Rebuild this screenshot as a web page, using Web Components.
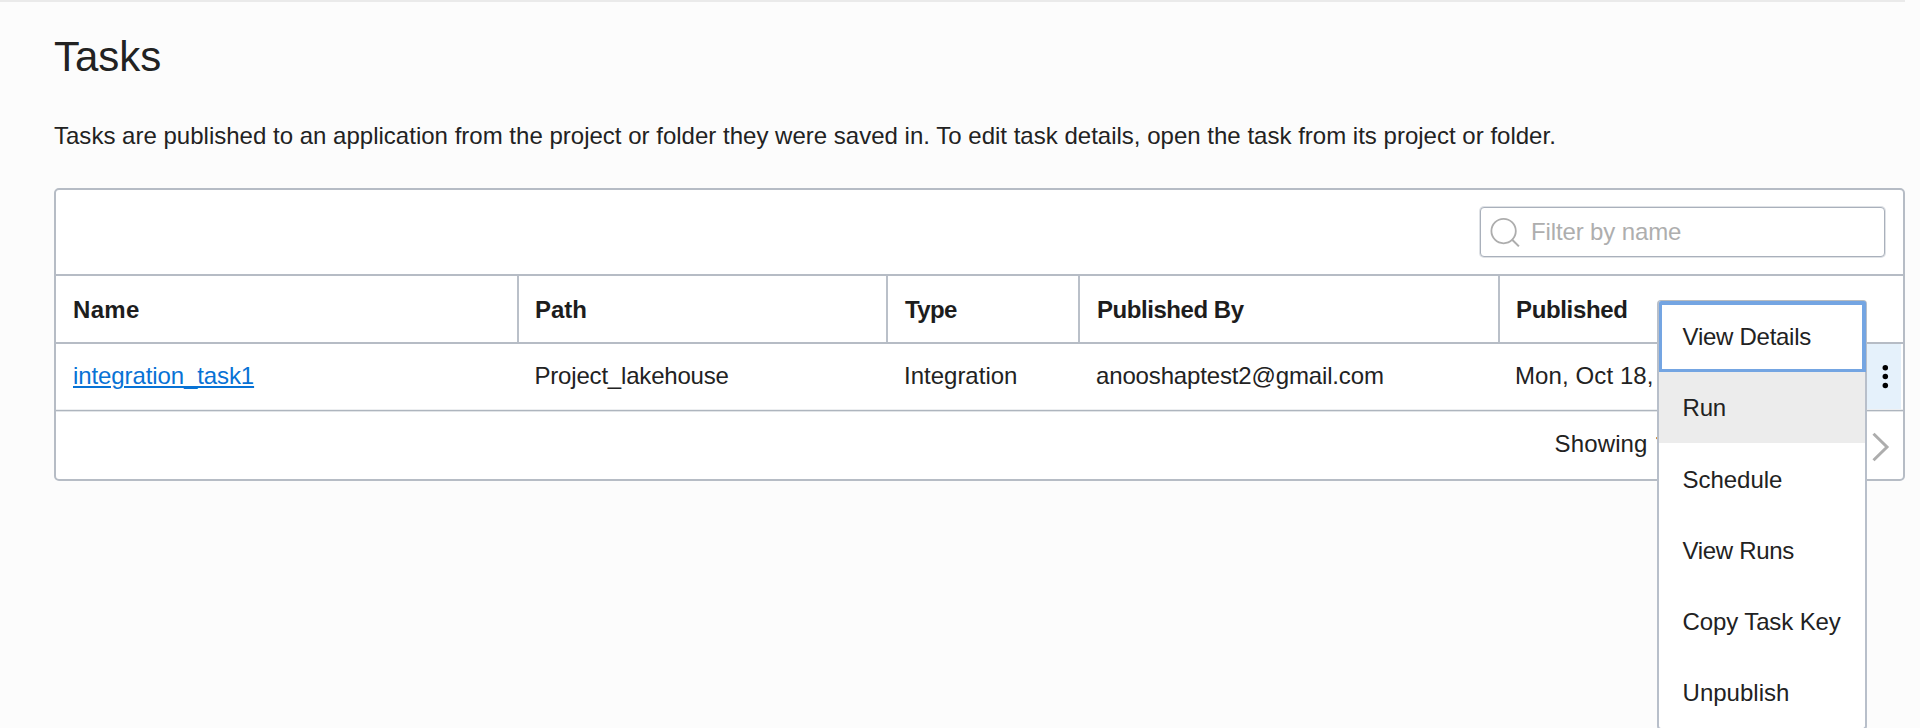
<!DOCTYPE html>
<html lang="en">
<head>
<meta charset="utf-8">
<title>Tasks</title>
<style>
html,body{margin:0;height:100%;overflow:hidden;background:#fcfcfc}
body{font:24px/28px "Liberation Sans",Arial,sans-serif;color:#222;--line:#b6bcc5}
</style>
</head>
<body>
<tasks-page>
  <span slot="title">Tasks</span>
  <span slot="description">Tasks are published to an application from the project or folder they were saved in. To edit task details, open the task from its project or folder.</span>
  <task-table>
    <filter-input slot="toolbar" placeholder="Filter by name"></filter-input>
    <table-row slot="header" head>
      <table-cell style="--pad:17px;--track:.3px">Name</table-cell>
      <table-cell divided>Path</table-cell>
      <table-cell divided style="--pad:17px;--track:-.6px">Type</table-cell>
      <table-cell divided style="--pad:17px;--track:-.45px">Published By</table-cell>
      <table-cell divided style="--track:-.35px">Published</table-cell>
    </table-row>
    <table-row slot="rows">
      <table-cell style="--pad:17px;--track:-.1px"><task-link>integration_task1</task-link></table-cell>
      <table-cell style="--pad:17.5px;--track:-.19px">Project_lakehouse</table-cell>
      <table-cell style="--pad:18px">Integration</table-cell>
      <table-cell style="--pad:18px;--track:-.15px">anooshaptest2@gmail.com</table-cell>
      <table-cell style="--pad:17px;--track:.1px">Mon, Oct 18,</table-cell>
      <row-actions></row-actions>
    </table-row>
    <table-pager slot="footer">Showing <span style="font-family:Roboto,sans-serif">1</span></table-pager>
  </task-table>
</tasks-page>
<action-menu>
  <menu-item focused style="--track:-.27px">View Details</menu-item>
  <menu-item active style="--track:-.3px">Run</menu-item>
  <menu-item style="--track:-.05px">Schedule</menu-item>
  <menu-item style="--track:-.33px">View Runs</menu-item>
  <menu-item style="--track:-.12px">Copy Task Key</menu-item>
  <menu-item>Unpublish</menu-item>
</action-menu>
<script>
const define = (name, html) => {
  const template = document.createElement('template');
  template.innerHTML = '<style>*{box-sizing:border-box}:host{box-sizing:border-box}</style>' + html;
  customElements.define(name, class extends HTMLElement {
    constructor() {
      super();
      this.attachShadow({ mode: 'open' }).append(template.content.cloneNode(true));
    }
    connectedCallback() {
      const input = this.shadowRoot.querySelector('input');
      if (input) input.placeholder = this.getAttribute('placeholder') || '';
    }
  });
};

define('tasks-page', `
<style>
:host{display:block;width:1905px}
.rule{height:2px;background:#eaeaea}
main{padding:31px 0 0 54px}
h1{margin:0;font-size:42px;line-height:48px;font-weight:400}
p{margin:41px 0 38px;white-space:nowrap;letter-spacing:.01px}
</style>
<div class="rule"></div>
<main><h1><slot name="title"></slot></h1><p><slot name="description"></slot></p><slot></slot></main>`);

define('task-table', `
<style>
:host{display:block;height:293px;background:#fff;border:2px solid var(--line);border-radius:5px}
.bar{height:86px;display:flex;justify-content:flex-end;align-items:flex-start;padding:17px 18px 0 0;border-bottom:2px solid var(--line)}
</style>
<div class="bar"><slot name="toolbar"></slot></div>
<slot name="header"></slot><slot name="rows"></slot><slot name="footer"></slot>`);

define('filter-input', `
<style>
:host{display:flex;align-items:center;width:405px;height:50px;border:1px solid #a9b0bb;box-shadow:0 0 0 1px #dfe2e6;border-radius:4px;background:#fff}
svg{flex:none;margin-left:9px}
input{flex:1;min-width:0;margin:0 0 0 10px;padding:0;border:0;outline:0;background:none;font:inherit;letter-spacing:-.13px;height:30px}
input::placeholder{color:#aeaeae;opacity:1}
</style>
<svg width="31" height="31" viewBox="0 0 31 31" fill="none" stroke="#adadad" stroke-width="1.8"><circle cx="13.6" cy="14.1" r="12.2"/><path d="M22.2 22.8 28.9 29.4" stroke-width="2"/></svg>
<input type="text">`);

define('table-row', `
<style>
:host{display:grid;grid-template-columns:461px 369px 192px 420px 1fr auto;position:relative;border-bottom:1px solid #aeb5be;box-shadow:0 1px #e2e5e8,inset 0 -1px #edeff1}
:host([head]){height:68px;font-weight:700;border-bottom:2px solid var(--line);box-shadow:none;color:#1d1d1d}
:host(:not([head])){height:67px}
</style><slot></slot>`);

define('table-cell', `
<style>
:host{display:block;padding:18px 0 0 var(--pad,16px);white-space:nowrap;letter-spacing:var(--track,0)}
:host([divided]){border-left:2px solid #bac0c9}
:host-context(table-row[head]){padding-top:20px}
</style><slot></slot>`);

define('task-link', `
<style>
a{color:#0872d5;text-decoration:underline;text-decoration-thickness:2px;text-underline-offset:2px}
</style><a href="#"><slot></slot></a>`);

define('row-actions', `
<style>
:host{display:flex;width:36px;height:65px;margin-right:2px;background:#e5f1fb;justify-content:flex-end;padding-right:12px}
svg{margin-top:19px}
</style>
<svg width="8" height="28" viewBox="0 0 8 28"><circle cx="4.3" cy="4.7" r="2.75"/><circle cx="4.3" cy="13.6" r="2.75"/><circle cx="4.3" cy="22.6" r="2.75"/></svg>`);

define('table-pager', `
<style>
:host{display:flex;height:68px;justify-content:space-between;padding:19px 13px 0 1498.5px;letter-spacing:.15px;white-space:nowrap}
svg{margin-top:1px}
</style>
<span><slot></slot></span>
<svg width="18" height="32" viewBox="0 0 18 32" fill="none" stroke="#adadad" stroke-width="3"><path d="M1.5 2.8 15 16 1.5 29.2"/></svg>`);

define('action-menu', `
<style>
:host{display:block;position:absolute;left:1657px;top:300px;width:210px;height:430px;background:#fff;border:2px solid #b8bfca;border-top:1px solid #b9bcbf;border-radius:4px}
</style><slot></slot>`);

define('menu-item', `
<style>
:host{display:block;height:71.15px;padding:22.3px 0 0 23.6px;letter-spacing:var(--track,0);white-space:nowrap}
:host([focused]){margin-right:-1px;padding:18.3px 0 0 20.6px;border:solid #74a5e2;border-width:4px 4px 3px 3px;border-radius:2px 2px 0 0}
:host([active]){background:#ececec}
</style><slot></slot>`);
</script>
</body>
</html>
